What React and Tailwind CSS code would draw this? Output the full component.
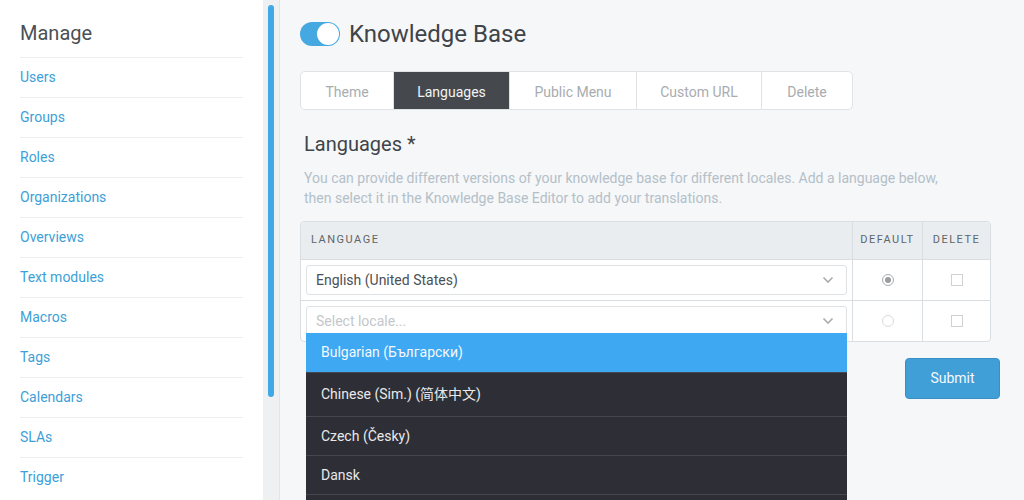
import React from 'react';

// Elementos del menú lateral
const MENU_ITEMS = [
  'Users',
  'Groups',
  'Roles',
  'Organizations',
  'Overviews',
  'Text modules',
  'Macros',
  'Tags',
  'Calendars',
  'SLAs',
  'Trigger'
];

const TABS = [
  { label: 'Theme', width: 'w-[92px]' },
  { label: 'Languages', width: 'w-[116px]', active: true },
  { label: 'Public Menu', width: 'w-[127px]' },
  { label: 'Custom URL', width: 'w-[125px]' },
  { label: 'Delete', width: 'w-[91px]' }
];

const LOCALES = [
  { label: 'Bulgarian (Български)', height: 'h-[39px]', active: true },
  { label: 'Chinese (Sim.) (简体中文)', height: 'h-[44px]' },
  { label: 'Czech (Česky)', height: 'h-[39px]' },
  { label: 'Dansk', height: 'h-[39px]' }
];

const Chevron = () => (
  <svg width="12" height="8" viewBox="0 0 12 8" className="shrink-0">
    <polyline points="1.5,1.5 6,6 10.5,1.5" fill="none" stroke="#a9acae" strokeWidth="1.6" />
  </svg>
);

const Select = ({ value, placeholder, children }) => (
  <div className="relative">
    <div className="h-[30px] bg-white border border-[#dfe2e5] rounded-[3px] flex items-center justify-between pl-[9px] pr-[12px]">
      {value ? (
        <span className="text-[14px] text-[#4b5055]">{value}</span>
      ) : (
        <span className="text-[14px] text-[#c4c7ca]">{placeholder}</span>
      )}
      <Chevron />
    </div>
    {children}
  </div>
);

const Radio = ({ checked }) => (
  <div className={`w-[12px] h-[12px] rounded-full border flex items-center justify-center bg-white ${checked ? 'border-[#a9acaf]' : 'border-[#d8dbdd]'}`}>
    {checked && <div className="w-[6px] h-[6px] rounded-full bg-[#9a9da0]" />}
  </div>
);

const Checkbox = () => (
  <div className="w-[12px] h-[12px] border border-[#cfd2d5] bg-white" />
);

const App = () => {
  return (
    <div className="w-[1024px] h-[500px] overflow-hidden flex font-['Roboto','Noto_Sans_CJK_SC',sans-serif]">
      {/* Sidebar */}
      <div className="w-[263px] shrink-0 bg-white px-5">
        <h2 className="text-[20px] leading-[24px] text-[#4a5055] pt-[21px] pb-[12px]">Manage</h2>
        <ul>
          {MENU_ITEMS.map((item) => (
            <li key={item} className="h-10 border-t border-[#eceef0] flex items-center text-[14px] text-[#3d9fd8]">
              {item}
            </li>
          ))}
        </ul>
      </div>

      {/* Scrollbar */}
      <div className="w-[17px] shrink-0 bg-[#eff0f2] border-r border-[#e2e4e7] pt-[5px] pl-[5px]">
        <div className="w-[6px] h-[392px] rounded-full bg-[#41a8e6]" />
      </div>

      {/* Content */}
      <div className="flex-1 bg-[#f6f7f9] pl-5 pr-6 pt-[22px] flex flex-col">
        <div className="flex items-center">
          <div className="w-10 h-6 rounded-full bg-[#45a8e0] flex items-center justify-end pr-[1px]">
            <div className="w-[22px] h-[22px] rounded-full bg-white" />
          </div>
          <h1 className="ml-[9px] text-[24px] leading-[24px] text-[#3f4449]">Knowledge Base</h1>
        </div>

        {/* Tabs */}
        <div className="mt-[25px] flex self-start bg-white border border-[#e0e3e6] rounded-[5px] overflow-hidden h-[39px]">
          {TABS.map((tab, i) => (
            <div
              key={tab.label}
              className={`${tab.width} flex items-center justify-center pt-[3px] text-[14px] ${i > 0 ? 'border-l border-[#e0e3e6]' : ''} ${tab.active ? 'bg-[#45494d] text-[#f2f3f4]' : 'text-[#a9acaf]'}`}
            >
              {tab.label}
            </div>
          ))}
        </div>

        <h3 className="mt-[22px] pl-1 text-[20px] leading-[24px] text-[#3f4449]">Languages *</h3>
        <p className="mt-[12px] pl-1 max-w-[654px] text-[14px] leading-[20px] text-[#b3c0c8]">
          You can provide different versions of your knowledge base for different locales. Add a language below, then select it in the Knowledge Base Editor to add your translations.
        </p>

        {/* Table */}
        <div className="mt-[13px] w-[691px] border border-[#d9dee2] rounded-[4px] bg-white">
          <div className="h-[38px] flex bg-[#e9edf0] border-b border-[#d9dee2] rounded-t-[4px] text-[11px] tracking-[1.5px] text-[#5f6569]">
            <div className="flex-1 flex items-center pl-[10px]">LANGUAGE</div>
            <div className="w-[70px] border-l border-[#d9dee2] flex items-center justify-center">DEFAULT</div>
            <div className="w-[68px] border-l border-[#d9dee2] flex items-center justify-center">DELETE</div>
          </div>
          <div className="h-[41px] flex border-b border-[#d9dee2]">
            <div className="flex-1 pl-[5px] pr-[5px] pt-[5px]">
              <Select value="English (United States)" />
            </div>
            <div className="w-[70px] border-l border-[#d9dee2] flex items-center justify-center">
              <Radio checked />
            </div>
            <div className="w-[68px] border-l border-[#d9dee2] flex items-center justify-center">
              <Checkbox />
            </div>
          </div>
          <div className="h-[40px] flex">
            <div className="flex-1 pl-[5px] pr-[5px] pt-[5px]">
              <Select placeholder="Select locale...">
                {/* Dropdown */}
                <ul className="absolute z-10 left-0 right-0 top-[27px] bg-[#2e2f36] pb-[20px]">
                  {LOCALES.map((loc) => (
                    <li
                      key={loc.label}
                      className={`${loc.height} flex items-center pl-[15px] text-[14px] ${loc.active ? 'bg-[#3ea8f3] text-[#f4f8fc]' : 'border-t border-[#46474e] text-[#e9e9eb]'}`}
                    >
                      {loc.label}
                    </li>
                  ))}
                  <li className="border-t border-[#46474e]" />
                </ul>
              </Select>
            </div>
            <div className="w-[70px] border-l border-[#d9dee2] flex items-center justify-center">
              <Radio />
            </div>
            <div className="w-[68px] border-l border-[#d9dee2] flex items-center justify-center">
              <Checkbox />
            </div>
          </div>
        </div>

        <div className="flex justify-end mt-[16px]">
          <button className="w-[95px] h-[41px] rounded-[4px] bg-[#419fd8] border border-[#3a8fc5] text-[14px] text-[#f4f8fb]">
            Submit
          </button>
        </div>
      </div>
    </div>
  );
};

export default App;
